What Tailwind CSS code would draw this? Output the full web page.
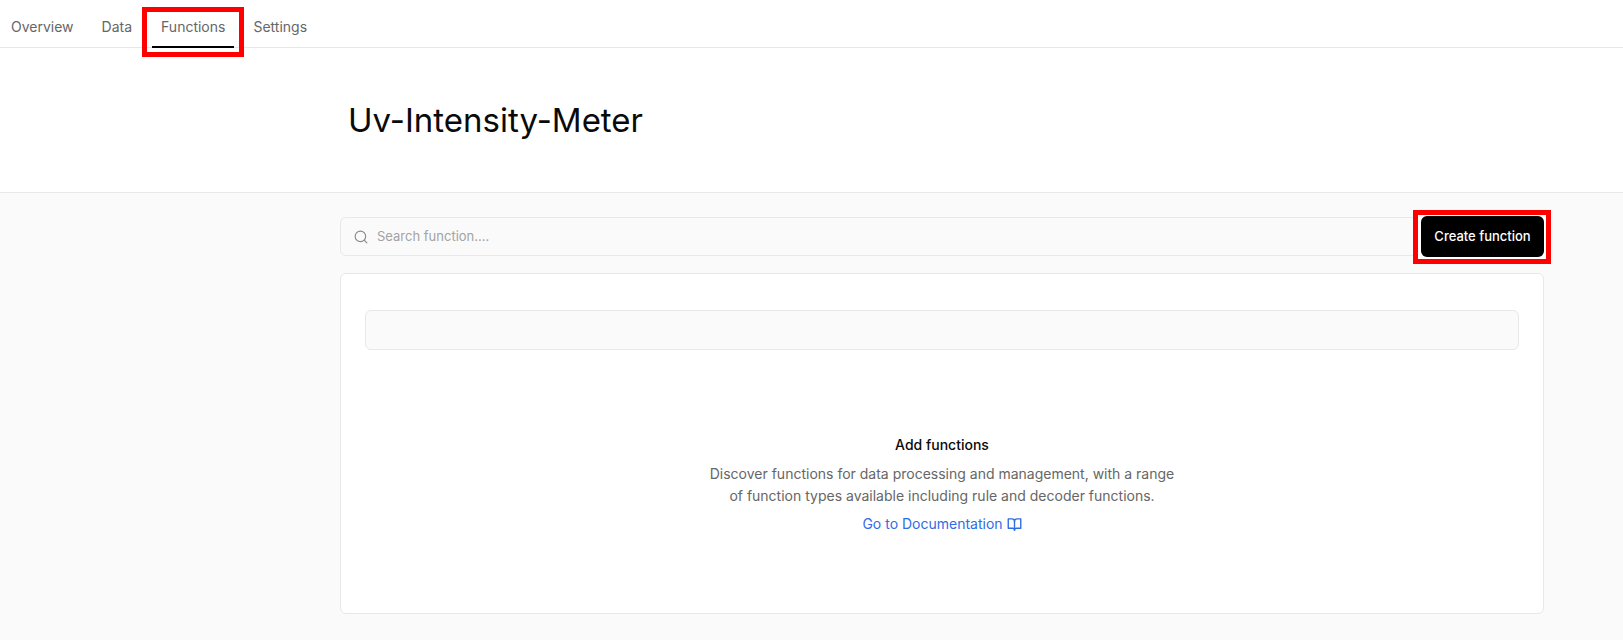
<!DOCTYPE html>
<html lang="en">
  <head>
    <meta charset="UTF-8" />
    <title>Uv-Intensity-Meter</title>
    <script src="https://cdn.jsdelivr.net/npm/@tailwindcss/browser@4"></script>
  </head>
  <body class="h-[640px] overflow-hidden bg-[#fafafa] font-['Inter',sans-serif]">
    <!-- tabs -->
    <nav class="flex h-12 items-stretch border-b border-[#e8e8e8] bg-white pl-[2px] text-sm text-[#666]">
      <a class="flex items-center px-[9px] pt-[6px]">Overview</a>
      <a class="ml-[10px] flex items-center px-[9px] pt-[6px]">Data</a>
      <a class="relative ml-[11px] flex items-center px-[9px] pt-[6px]">
        Functions
        <span class="absolute inset-x-0 bottom-[-1px] h-[2px] bg-black"></span>
        <span class="absolute -inset-x-[10px] top-[7px] -bottom-[10px] border-[5px] border-[#ff0000]"></span>
      </a>
      <a class="ml-[10px] flex items-center px-[9px] pt-[6px]">Settings</a>
    </nav>

    <header class="flex h-[145px] items-center border-b border-[#e8e8e8] bg-white pl-[348px]">
      <h1 class="text-[33px] font-normal leading-10 text-[#0a0a0a]">Uv-Intensity-Meter</h1>
    </header>

    <main class="ml-[340px] mr-[79px] pt-[24px]">
      <div class="flex h-[39px] items-stretch">
        <div class="flex flex-1 items-center gap-[9px] rounded-md border border-[#e8e8e8] bg-[#fafafa] pl-[13px] text-[13px] text-[#a3a3a3]">
          <svg class="size-[14px] text-[#8a8a8a]" viewBox="0 0 24 24" fill="none" stroke="currentColor" stroke-width="2" stroke-linecap="round" stroke-linejoin="round">
            <circle cx="11" cy="11" r="9"></circle>
            <path d="M22 22l-4.5-4.5"></path>
          </svg>
          <span>Search function....</span>
        </div>
        <div class="relative ml-[1px] -my-px w-[123px] shrink-0">
          <span class="absolute -left-2 -right-[7px] -top-[6px] -bottom-[7px] border-[5px] border-[#ff0000] bg-white"></span>
          <button class="relative h-full w-full rounded-md bg-black text-[13px] font-medium text-white">Create function</button>
        </div>
      </div>

      <section class="mt-[17px] h-[341px] rounded-md border border-[#e8e8e8] bg-white px-6 pt-[36px]">
        <div class="h-10 rounded-md border border-[#e8e8e8] bg-[#fafafa]"></div>
        <div class="mt-[85px] flex flex-col items-center text-center">
          <h2 class="text-sm font-[450] leading-5 text-[#0a0a0a]">Add functions</h2>
          <p class="mt-[8px] w-[480px] text-sm leading-[22px] text-[#666]">Discover functions for data processing and management, with a range of function types available including rule and decoder functions.</p>
          <a class="mt-[7px] flex items-center gap-1 text-sm leading-5 text-[#2f6ce5]">
            Go to Documentation
            <svg class="size-[15px]" viewBox="0 0 24 24" fill="none" stroke="currentColor" stroke-width="2.2" stroke-linecap="round" stroke-linejoin="round">
              <path d="M12 7a4 4 0 0 0-4-4H2v15h7a3 3 0 0 1 3 3 3 3 0 0 1 3-3h7V3h-6a4 4 0 0 0-4 4z"></path>
              <path d="M12 7v14"></path>
            </svg>
          </a>
        </div>
      </section>
    </main>
  </body>
</html>
